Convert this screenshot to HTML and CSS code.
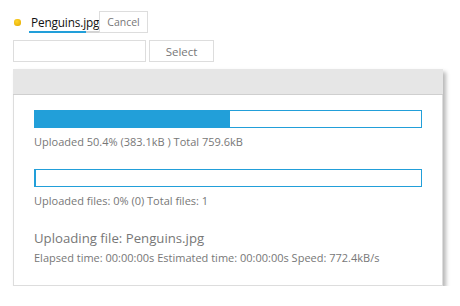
FILE: index.html
```html
<!DOCTYPE html>
<html>
<head>
<meta charset="utf-8">
<link rel="stylesheet" href="styles.css">
</head>
<body>
<div class="file-row">
  <span class="dot"></span>
  <div class="file">
    <span class="file-name">Penguins.jpg</span>
    <div class="file-bar"><div class="file-bar-fill"></div></div>
  </div>
  <button class="btn cancel">Cancel</button>
</div>
<div class="select-row">
  <input class="file-input" type="text">
  <button class="btn select">Select</button>
</div>
<div class="panel">
  <div class="panel-header"></div>
  <div class="panel-body">
    <div class="progress"><div class="progress-fill" style="width:50.4%"></div></div>
    <div class="info">Uploaded 50.4% (383.1kB ) Total 759.6kB</div>
    <div class="progress second"><div class="progress-fill" style="width:0%"></div></div>
    <div class="info">Uploaded files: 0% (0) Total files: 1</div>
    <div class="current">Uploading file: Penguins.jpg</div>
    <div class="info times">Elapsed time: 00:00:00s Estimated time: 00:00:00s Speed: 772.4kB/s</div>
  </div>
</div>
</body>
</html>
```

FILE: styles.css
```css
html, body {
  margin: 0;
  padding: 0;
  background: #fff;
}
body {
  font-family: "Open Sans", "DejaVu Sans", sans-serif;
  color: #777;
}
.file-row {
  display: flex;
  align-items: flex-start;
  margin: 11px 0 0 14px;
  height: 22px;
}
.dot {
  width: 7px;
  height: 7px;
  border-radius: 3px;
  background: radial-gradient(circle at 40% 35%, #ffd52a, #e2a800);
  margin-top: 8px;
}
.file {
  margin-left: 8px;
  display: flex;
  flex-direction: column;
  width: 70px;
  height: 22px;
}
.file-name {
  font-size: 11.8px;
  line-height: 17px;
  color: #111;
  padding-left: 2px;
  margin-top: 3px;
  white-space: nowrap;
  letter-spacing: -0.15px;
}
.file-bar {
  height: 4px;
  background: #d4d4d4;
}
.file-bar-fill {
  width: 57px;
  height: 100%;
  background: #229fd9;
}
.btn {
  font-family: "Open Sans", "DejaVu Sans", sans-serif;
  background: #fff;
  border: 1px solid #ddd;
  color: #777;
  padding: 0;
  margin: 0;
  border-radius: 0;
}
.cancel {
  width: 49px;
  height: 22px;
  font-size: 10.5px;
}
.select-row {
  display: flex;
  gap: 3px;
  margin: 7px 0 0 13px;
}
.file-input {
  box-sizing: border-box;
  width: 133px;
  height: 22px;
  border: 1px solid #ddd;
  margin: 0;
  padding: 0;
}
.select {
  width: 65px;
  height: 22px;
  font-size: 11.5px;
}
.panel {
  box-sizing: border-box;
  width: 430px;
  margin: 7px 0 0 13px;
  border: 1px solid #ddd;
  border-top: none;
  background: #fff;
  box-shadow: 3px 3px 4px rgba(0,0,0,0.28);
}
.panel-header {
  height: 25px;
  background: #e6e6e6;
  border-bottom: 1px solid #cfcfcf;
  margin: 0 -1px;
}
.panel-body {
  padding: 15px 20px 19px 20px;
}
.progress {
  box-sizing: border-box;
  height: 18px;
  border: 1px solid #229fd9;
  border-left-width: 2px;
}
.progress-fill {
  height: 100%;
  background: #229fd9;
}
.info {
  font-size: 11px;
  line-height: 16px;
  margin-top: 6px;
  white-space: nowrap;
}
.progress.second {
  margin-top: 19px;
}
.current {
  font-size: 13.2px;
  line-height: 20px;
  margin-top: 19px;
}
.times {
  margin-top: 2px;
}
```
